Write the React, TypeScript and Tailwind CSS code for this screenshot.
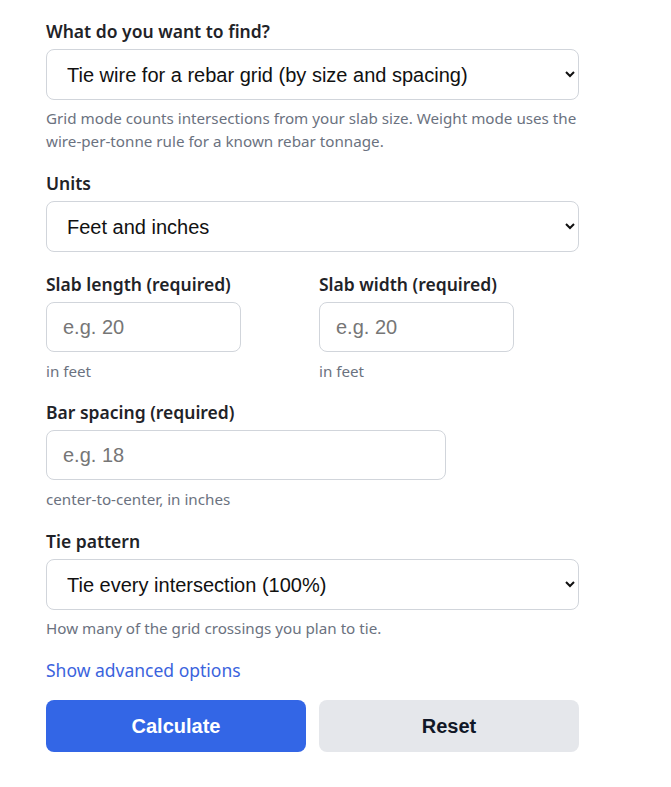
import React from "react";

const labelCls =
  "block text-[17.5px] leading-6 font-semibold text-[#1f2328] mb-[6px]";
const helpCls = "text-[15.2px] leading-[23px] text-[#6b7280] mt-[7px]";
const controlCls =
  "block w-full h-[51px] rounded-lg border border-[#d1d5db] bg-white pl-4 pr-3 text-[20px] text-[#111] outline-none";
const inputCls =
  "block h-[50px] rounded-lg border border-[#d1d5db] bg-white px-4 text-[20px] placeholder:text-[#767676] outline-none";
const arial = { fontFamily: '"Liberation Sans", Arial, sans-serif' };

function Field({
  label,
  help,
  children,
}: {
  label: string;
  help?: string;
  children: React.ReactNode;
}) {
  return (
    <div>
      <label className={labelCls}>{label}</label>
      {children}
      {help && <p className={helpCls}>{help}</p>}
    </div>
  );
}

export default function App() {
  const [mode, setMode] = React.useState("grid");
  const [units, setUnits] = React.useState("imperial");
  const [pattern, setPattern] = React.useState("100");

  return (
    <div
      className="bg-white min-h-screen pl-[46px] pt-[19px]"
      style={{ fontFamily: '"Noto Sans", "Open Sans", sans-serif' }}
    >
      <form
        className="w-[533px] flex flex-col gap-[18px]"
        onSubmit={(e) => e.preventDefault()}
      >
        <Field
          label="What do you want to find?"
          help="Grid mode counts intersections from your slab size. Weight mode uses the wire-per-tonne rule for a known rebar tonnage."
        >
          <select
            value={mode}
            onChange={(e) => setMode(e.target.value)}
            className={controlCls}
            style={arial}
          >
            <option value="grid">Tie wire for a rebar grid (by size and spacing)</option>
            <option value="weight">Tie wire by rebar weight</option>
          </select>
        </Field>

        <Field label="Units">
          <select
            value={units}
            onChange={(e) => setUnits(e.target.value)}
            className={controlCls}
            style={arial}
          >
            <option value="imperial">Feet and inches</option>
            <option value="metric">Meters and centimeters</option>
          </select>
        </Field>

        <div className="grid grid-cols-2 gap-[13px] mt-[2px]">
          <div>
            <label className={labelCls}>Slab length (required)</label>
            <input placeholder="e.g. 20" className={`${inputCls} w-[195px]`} style={arial} />
            <p className="text-[15.2px] leading-[23px] text-[#6b7280] mt-2">in feet</p>
          </div>
          <div>
            <label className={labelCls}>Slab width (required)</label>
            <input placeholder="e.g. 20" className={`${inputCls} w-[195px]`} style={arial} />
            <p className="text-[15.2px] leading-[23px] text-[#6b7280] mt-2">in feet</p>
          </div>
        </div>

        <div className="-mt-[1px]">
          <label className={labelCls}>Bar spacing (required)</label>
          <input placeholder="e.g. 18" className={`${inputCls} w-[400px]`} style={arial} />
          <p className="text-[15.2px] leading-[23px] text-[#6b7280] mt-2">
            center-to-center, in inches
          </p>
        </div>

        <Field
          label="Tie pattern"
          help="How many of the grid crossings you plan to tie."
        >
          <select
            value={pattern}
            onChange={(e) => setPattern(e.target.value)}
            className={controlCls}
            style={arial}
          >
            <option value="100">Tie every intersection (100%)</option>
            <option value="50">Tie every other intersection (50%)</option>
            <option value="25">Tie every fourth intersection (25%)</option>
          </select>
        </Field>

        <div className="h-6">
          <button
            type="button"
            className="block h-6 text-[17.5px] leading-6 text-[#3b63dd] font-normal"
          >
            Show advanced options
          </button>
        </div>

        <div className="grid grid-cols-2 gap-[13px]" style={arial}>
          <button
            type="submit"
            className="h-[52px] rounded-lg bg-[#3366e6] text-white text-[20px] font-bold"
          >
            Calculate
          </button>
          <button
            type="reset"
            className="h-[52px] rounded-lg bg-[#e5e7eb] text-[#111827] text-[20px] font-bold"
          >
            Reset
          </button>
        </div>
      </form>
    </div>
  );
}
